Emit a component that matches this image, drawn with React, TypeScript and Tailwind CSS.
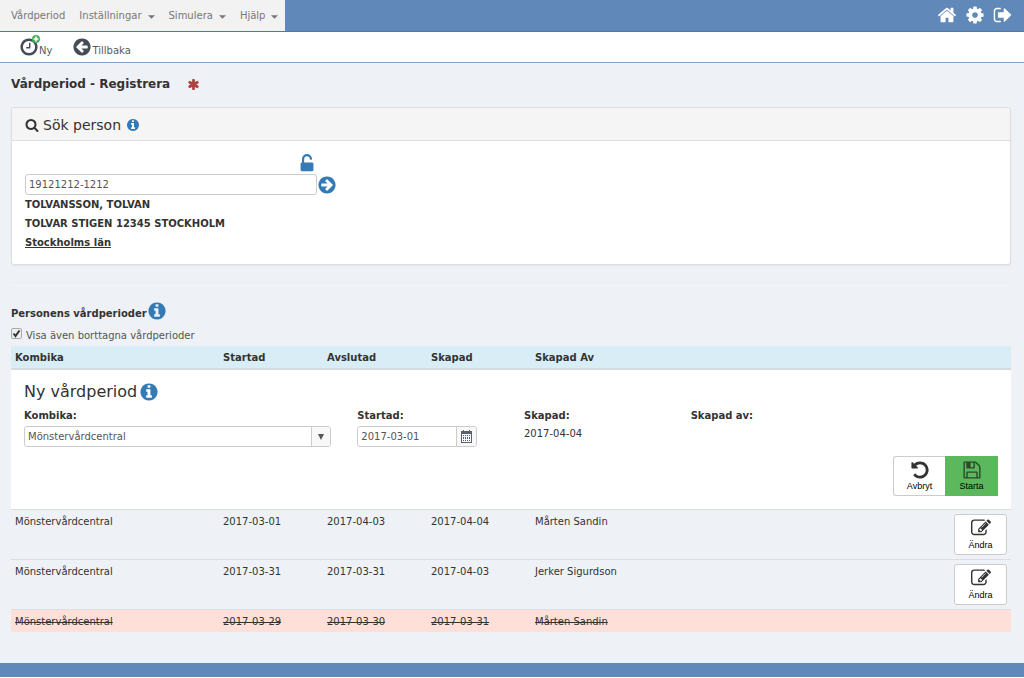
import { useState } from "react";
import type { ReactNode } from "react";

const circle =
  "M1664 896q0 209-103 385.5t-279.5 279.5-385.5 103-385.5-103-279.5-279.5-103-385.5 103-385.5 279.5-279.5 385.5-103 385.5 103 279.5 279.5 103 385.5z";

const icons = {
  home: "M1472 992v480q0 26-19 45t-45 19h-384v-384h-256v384h-384q-26 0-45-19t-19-45v-480q0-1 .5-3t.5-3l575-474 575 474q1 2 1 6zm223-69l-62 74q-8 9-21 11h-3q-13 0-21-7l-692-577-692 577q-12 8-24 7-13-2-21-11l-62-74q-8-10-7-23.5t11-21.5l719-599q32-26 76-26t76 26l244 204v-195q0-14 9-23t23-9h192q14 0 23 9t9 23v408l219 182q10 8 11 21.5t-7 23.5z",
  cog: "M1152 896q0-106-75-181t-181-75-181 75-75 181 75 181 181 75 181-75 75-181zm512-109v222q0 12-8 23t-20 13l-185 28q-19 54-39 91 35 50 107 138 10 12 10 25t-9 23q-27 37-99 108t-94 71q-12 0-26-9l-138-108q-44 23-91 38-16 136-29 186-7 28-36 28h-222q-14 0-24.5-8.5t-11.5-21.5l-28-184q-49-16-90-37l-141 107q-10 9-25 9-14 0-25-11-126-114-165-168-7-10-7-23 0-12 8-23 15-21 51-66.5t54-70.5q-27-50-41-99l-183-27q-13-2-21-12.5t-8-23.5v-222q0-12 8-23t19-13l186-28q14-46 39-92-40-57-107-138-10-12-10-24 0-10 9-23 26-36 98.5-107.5t94.5-71.5q13 0 26 10l138 107q44-23 91-38 16-136 29-186 7-28 36-28h222q14 0 24.5 8.5t11.5 21.5l28 184q49 16 90 37l142-107q9-9 24-9 13 0 25 10 129 119 165 170 7 8 7 22 0 12-8 23-15 21-51 66.5t-54 70.5q26 50 41 98l183 28q13 2 21 12.5t8 23.5z",
  signOut:
    "M704 1440q0 4 1 20t.5 26.5-3 23.5-10 19.5-20.5 6.5h-320q-119 0-203.5-84.5t-84.5-203.5v-704q0-119 84.5-203.5t203.5-84.5h320q13 0 22.5 9.5t9.5 22.5q0 4 1 20t.5 26.5-3 23.5-10 19.5-20.5 6.5h-320q-66 0-113 47t-47 113v704q0 66 47 113t113 47h312l11.5 1 11.5 3 8 5.5 7 9 2 13.5zm928-544q0 26-19 45l-544 544q-19 19-45 19t-45-19-19-45v-288h-448q-26 0-45-19t-19-45v-384q0-26 19-45t45-19h448v-288q0-26 19-45t45-19 45 19l544 544q19 19 19 45z",
  search:
    "M1216 832q0-185-131.5-316.5t-316.5-131.5-316.5 131.5-131.5 316.5 131.5 316.5 316.5 131.5 316.5-131.5 131.5-316.5zm512 832q0 52-38 90t-90 38q-54 0-90-38l-343-342q-179 124-399 124-143 0-273.5-55.5t-225-150-150-225-55.5-273.5 55.5-273.5 150-225 225-150 273.5-55.5 273.5 55.5 225 150 150 225 55.5 273.5q0 220-124 399l343 343q37 37 37 90z",
  info:
    "M1152 1376v-160q0-14-9-23t-23-9h-96v-512q0-14-9-23t-23-9h-320q-14 0-23 9t-9 23v160q0 14 9 23t23 9h96v320h-96q-14 0-23 9t-9 23v160q0 14 9 23t23 9h448q14 0 23-9t9-23zM1024 480v-160q0-14-9-23t-23-9h-192q-14 0-23 9t-9 23v160q0 14 9 23t23 9h192q14 0 23-9t9-23z" +
    circle,
  arrowRight:
    "M1413 896q0-27-18-45l-91-91-362-362q-18-18-45-18t-45 18l-91 91q-18 18-18 45t18 45l189 189h-502q-26 0-45 19t-19 45v128q0 26 19 45t45 19h502l-189 189q-19 19-19 45t19 45l91 91q18 18 45 18t45-18l362-362 91-91q18-18 18-45z" +
    circle,
  clock:
    "M1024 544v448q0 14-9 23t-23 9h-320q-14 0-23-9t-9-23v-64q0-14 9-23t23-9h224v-352q0-14 9-23t23-9h64q14 0 23 9t9 23zM1440 896q0-148-73-273t-198-198-273-73-273 73-198 198-73 273 73 273 198 198 273 73 273-73 198-198 73-273z" +
    circle,
  asterisk:
    "M1546 1050q46 26 59.5 77.5t-12.5 97.5l-64 110q-26 46-77.5 59.5t-97.5-12.5l-266-153v307q0 52-38 90t-90 38h-128q-52 0-90-38t-38-90v-307l-266 153q-46 26-97.5 12.5t-77.5-59.5l-64-110q-26-46-12.5-97.5t59.5-77.5l266-154-266-154q-46-26-59.5-77.5t12.5-97.5l64-110q26-46 77.5-59.5t97.5 12.5l266 153v-307q0-52 38-90t90-38h128q52 0 90 38t38 90v307l266-153q46-26 97.5-12.5t77.5 59.5l64 110q26 46 12.5 97.5t-59.5 77.5l-266 154z",
  unlock:
    "M1376 768q40 0 68 28t28 68v576q0 40-28 68t-68 28h-960q-40 0-68-28t-28-68v-576q0-40 28-68t68-28h32v-320q0-185 131.5-316.5t316.5-131.5 316.5 131.5 131.5 316.5q0 26-19 45t-45 19h-64q-26 0-45-19t-19-45q0-106-75-181t-181-75-181 75-75 181v320h736z",
  undo: "M1664 896q0 156-61 298t-164 245-245 164-298 61q-172 0-327-72.5t-264-204.5q-7-10-6.5-22.5t8.5-20.5l137-138q10-9 25-9 16 2 23 12 73 95 179 147t225 52q104 0 198.5-40.5t163.5-109.5 109.5-163.5 40.5-198.5-40.5-198.5-109.5-163.5-163.5-109.5-198.5-40.5q-98 0-188 35.5t-160 101.5l137 138q31 30 14 69-17 40-59 40h-448q-26 0-45-19t-19-45v-448q0-42 40-59 39-17 69 14l130 129q107-101 244.5-156.5t284.5-55.5q156 0 298 61t245 164 164 245 61 298z",
  save: "M512 1536h768v-384h-768v384zm896 0h128v-896q0-14-10-38.5t-20-34.5l-281-281q-10-10-34-20t-39-10v416q0 40-28 68t-68 28h-576q-40 0-68-28t-28-68v-416h-128v1280h128v-416q0-40 28-68t68-28h832q40 0 68 28t28 68v416zm-384-928v-320q0-13-9.5-22.5t-22.5-9.5h-192q-13 0-22.5 9.5t-9.5 22.5v320q0 13 9.5 22.5t22.5 9.5h192q13 0 22.5-9.5t9.5-22.5zm640 32v928q0 40-28 68t-68 28h-1344q-40 0-68-28t-28-68v-1344q0-40 28-68t68-28h928q40 0 88 20t76 48l280 280q28 28 48 76t20 88z",
  edit: "M888 1184l116-116-152-152-116 116v56h96v96h56zm440-720q-16-16-33 1l-350 350q-17 17-1 33t33-1l350-350q17-17 1-33zm80 594v190q0 119-84.5 203.5t-203.5 84.5h-832q-119 0-203.5-84.5t-84.5-203.5v-832q0-119 84.5-203.5t203.5-84.5h832q63 0 117 25 15 7 18 23 3 17-9 29l-49 49q-14 14-32 8-23-6-45-6h-832q-66 0-113 47t-47 113v832q0 66 47 113t113 47h832q66 0 113-47t47-113v-126q0-13 9-22l64-64q15-15 35-7t20 29zm-96-738l288 288-672 672h-288v-288zm444 132l-92 92-288-288 92-92q28-28 68-28t68 28l152 152q28 28 28 68t-28 68z",
};

function Icon({ name, className }: { name: keyof typeof icons; className?: string }) {
  return (
    <svg viewBox="0 0 1792 1792" fill="currentColor" fillRule="evenodd" aria-hidden="true" className={className}>
      <path d={icons[name]} />
    </svg>
  );
}

const periods = [
  { unit: "Mönstervårdcentral", start: "2017-03-01", end: "2017-04-03", created: "2017-04-04", by: "Mårten Sandin", removed: false },
  { unit: "Mönstervårdcentral", start: "2017-03-31", end: "2017-03-31", created: "2017-04-03", by: "Jerker Sigurdson", removed: false },
  { unit: "Mönstervårdcentral", start: "2017-03-29", end: "2017-03-30", created: "2017-03-31", by: "Mårten Sandin", removed: true },
];

function MenuItem({ label, caret = true }: { label: string; caret?: boolean }) {
  return (
    <button className="flex items-center gap-[6px]">
      {label}
      {caret && (
        <svg viewBox="0 0 8 4" className="w-[7px] h-1 mt-[2px]" fill="#777" aria-hidden="true">
          <path d="M0 0h8L4 4z" />
        </svg>
      )}
    </button>
  );
}

function Header() {
  return (
    <header>
      <div className="flex justify-between h-8 bg-[#6088b8] border-b border-[#5078a8]">
        <nav className="flex items-center gap-[14px] pl-[11px] pr-[7px] bg-[#f2f2f2] text-[#777] text-[10px]">
          <MenuItem label="Vårdperiod" caret={false} />
          <MenuItem label="Inställningar" />
          <MenuItem label="Simulera" />
          <MenuItem label="Hjälp" />
        </nav>
        <div className="flex items-center gap-2 pr-[11px] pb-[2px] text-white">
          <button aria-label="Hem">
            <Icon name="home" className="size-5" />
          </button>
          <button aria-label="Inställningar">
            <Icon name="cog" className="size-5" />
          </button>
          <button aria-label="Logga ut">
            <Icon name="signOut" className="size-5" />
          </button>
        </div>
      </div>
      <div className="flex items-start gap-5 h-[31px] pl-[19px] pt-[5px] bg-white border-b border-[#7f9fc6] text-[#555c66] text-[10px]">
        <button className="flex items-end">
          <span className="relative">
            <Icon name="clock" className="size-5 text-[#444c58]" />
            <svg viewBox="0 0 8 8" className="absolute -top-[2px] left-[13px] size-2" aria-hidden="true">
              <circle cx="4" cy="4" r="4" fill="#4cae5c" />
              <path d="M4 1.6v4.8M1.6 4h4.8" stroke="#fff" strokeWidth="1.6" />
            </svg>
          </span>
          <span className="leading-[12px]">Ny</span>
        </button>
        <button className="flex items-end">
          <Icon name="arrowRight" className="size-5 -scale-x-100 text-[#444c58]" />
          <span className="leading-[12px]">Tillbaka</span>
        </button>
      </div>
    </header>
  );
}

function SearchPanel() {
  return (
    <section className="bg-white border border-[#ddd] rounded-[3px] shadow-xs">
      <h2 className="flex items-center h-[33px] pt-px px-[13px] bg-[#f5f5f5] border-b border-[#ddd] rounded-t-[3px] text-sm">
        <Icon name="search" className="size-[14px] mr-1" />
        Sök person
        <Icon name="info" className="size-[14px] ml-[5px] text-[#337ab7]" />
      </h2>
      <div className="px-[13px] pt-[13px] pb-3">
        <div className="flex justify-end w-[292px]">
          <button aria-label="Lås upp">
            <Icon name="unlock" className="size-5 text-[#337ab7]" />
          </button>
        </div>
        <div className="flex items-center">
          <input
            aria-label="Personnummer"
            defaultValue="19121212-1212"
            className="w-[292px] h-[21px] px-[3px] border border-[#ccc] rounded-[3px] bg-white text-[10px] text-[#555]"
          />
          <button aria-label="Sök">
            <Icon name="arrowRight" className="size-5 text-[#337ab7]" />
          </button>
        </div>
        <div className="text-[10px] leading-[19px] font-bold">
          <p>TOLVANSSON, TOLVAN</p>
          <p>TOLVAR STIGEN 12345 STOCKHOLM</p>
          <p>
            <a href="#lan" className="underline">
              Stockholms län
            </a>
          </p>
        </div>
      </div>
    </section>
  );
}

function Field({ label, className, children }: { label: ReactNode; className?: string; children?: ReactNode }) {
  return (
    <div className={`px-[13px] ${className ?? ""}`}>
      <div className="font-bold leading-[18px]">{label}</div>
      {children}
    </div>
  );
}

function NewPeriodForm() {
  return (
    <form className="bg-white pt-[11px] pb-[13px]" onSubmit={(e) => e.preventDefault()}>
      <h2 className="flex items-center gap-[2px] px-[13px] mb-1 h-[22px] text-base">
        Ny vårdperiod
        <Icon name="info" className="size-5 text-[#337ab7]" />
      </h2>
      <div className="grid grid-cols-6">
        <Field label={<label htmlFor="kombika">Kombika:</label>} className="col-span-2">
          <div className="relative mt-px">
            <select
              id="kombika"
              className="block appearance-none w-full h-[21px] px-[3px] border border-[#ccc] rounded-[3px] bg-white text-[#555]"
            >
              <option>Mönstervårdcentral</option>
            </select>
            <span className="pointer-events-none absolute inset-y-px right-px w-[19px] flex items-center justify-center border-l border-[#ccc] bg-[#f8f8f8] rounded-r-[2px]">
              <svg viewBox="0 0 6 6" className="size-[6px]" fill="#555" aria-hidden="true">
                <path d="M0 0h6L3 6z" />
              </svg>
            </span>
          </div>
        </Field>
        <Field label={<label htmlFor="startad">Startad:</label>}>
          <div className="flex mt-px w-[120px] h-[21px] border border-[#ccc] rounded-[3px] bg-white overflow-hidden">
            <input id="startad" defaultValue="2017-03-01" className="flex-1 min-w-0 px-[3px] text-[#555]" />
            <button
              type="button"
              aria-label="Välj datum"
              className="w-5 flex items-center justify-center border-l border-[#ccc] bg-[#f8f8f8]"
            >
              <svg viewBox="0 0 11 13" className="w-[11px] h-[13px]" fill="#5a6070" aria-hidden="true">
                <path fillRule="evenodd" d="M2 0h1v1h5V0h1v1h2v12H0V1h2zM1 4v8h9V4z" />
                <path d="M2 5h1v1H2zm2 0h1v1H4zm2 0h1v1H6zm2 0h1v1H8zM2 7h1v2H2zm2 0h1v2H4zm2 0h1v2H6zm2 0h1v2H8zM2 10h1v1H2zm2 0h1v1H4zm2 0h1v1H6zm2 0h1v1H8z" />
              </svg>
            </button>
          </div>
        </Field>
        <Field label="Skapad:">
          <div className="mt-px leading-4">2017-04-04</div>
        </Field>
        <Field label="Skapad av:" />
      </div>
      <div className="flex justify-end px-[13px] mt-[9px] font-['Liberation_Sans',sans-serif] text-[9px] text-black">
        <button
          type="button"
          className="flex flex-col items-center w-13 h-10 pt-[3px] border border-r-0 border-[#ccc] rounded-l-[3px] bg-white"
        >
          <Icon name="undo" className="size-5 text-[#333]" />
          <span className="mt-px leading-[10px]">Avbryt</span>
        </button>
        <button
          type="submit"
          className="flex flex-col items-center w-[53px] h-10 pt-[3px] border border-[#5cb85c] bg-[#5cb85c]"
        >
          <Icon name="save" className="size-5 text-[#2b4a2b]" />
          <span className="mt-px leading-[10px]">Starta</span>
        </button>
      </div>
    </form>
  );
}

export default function App() {
  const [showRemoved, setShowRemoved] = useState(true);

  return (
    <div className="bg-[#eef1f6] font-['DejaVu_Sans',Verdana,sans-serif] text-[#333] text-[10px]">
      <Header />
      <main className="pl-[11px] pr-[13px] pt-3 pb-[31px]">
        <h1 className="flex items-center gap-[17px] h-[18px] mb-[14px] text-xs font-bold">
          Vårdperiod - Registrera
          <Icon name="asterisk" className="size-[13px] text-[#a94442]" />
        </h1>
        <SearchPanel />
        <hr className="mt-[17px] mb-[18px] border-[#ebedf1]" />

        <h2 className="flex items-center font-bold">
          <span className="pt-[5px]">Personens vårdperioder</span>
          <Icon name="info" className="size-5 text-[#337ab7]" />
        </h2>
        <label className="flex items-center gap-1 h-[25px] text-[#555]">
          <input
            type="checkbox"
            checked={showRemoved}
            onChange={(e) => setShowRemoved(e.target.checked)}
            className="peer sr-only"
          />
          <span className="size-[11px] flex border border-[#aaa] rounded-[2px] bg-[#eee]">
            {showRemoved && (
              <svg viewBox="0 0 9 9" fill="none" stroke="#333" strokeWidth="2" aria-hidden="true">
                <path d="M1.5 4.5l2 2.5L7.5 1.5" />
              </svg>
            )}
          </span>
          <span className="pt-1">Visa även borttagna vårdperioder</span>
        </label>

        <table className="w-full table-fixed text-left">
          <thead>
            <tr className="h-[23px] bg-[#d9edf7] border-b-2 border-[#d5dade]">
              <th className="w-[208px] px-1">Kombika</th>
              <th className="w-26 px-1">Startad</th>
              <th className="w-26 px-1">Avslutad</th>
              <th className="w-26 px-1">Skapad</th>
              <th className="px-1">Skapad Av</th>
              <th className="w-[61px]" aria-label="Åtgärd" />
            </tr>
          </thead>
          <tbody>
            <tr>
              <td colSpan={6} className="p-0">
                <NewPeriodForm />
              </td>
            </tr>
            {periods
              .filter((p) => showRemoved || !p.removed)
              .map((p, i) => (
                <tr
                  key={i}
                  className={
                    p.removed
                      ? "border-t border-[#ddd] bg-[#fee0d8] align-top line-through"
                      : "border-t border-[#ddd] align-top"
                  }
                >
                  <td className="px-1 pt-[5px] pb-[3px] leading-[14px]">{p.unit}</td>
                  <td className="px-1 pt-[5px] pb-[3px] leading-[14px]">{p.start}</td>
                  <td className="px-1 pt-[5px] pb-[3px] leading-[14px]">{p.end}</td>
                  <td className="px-1 pt-[5px] pb-[3px] leading-[14px]">{p.created}</td>
                  <td className="px-1 pt-[5px] pb-[3px] leading-[14px]">{p.by}</td>
                  <td className="px-1">
                    {!p.removed && (
                      <button className="flex flex-col items-center w-[53px] h-[41px] my-1 pt-[3px] border border-[#ccc] rounded-[3px] bg-white font-['Liberation_Sans',sans-serif] text-[9px] text-black">
                        <Icon name="edit" className="size-5 text-[#333]" />
                        <span className="mt-[2px] leading-[10px]">Ändra</span>
                      </button>
                    )}
                  </td>
                </tr>
              ))}
          </tbody>
        </table>
      </main>
      <footer className="h-[14px] bg-[#6088b8]" />
    </div>
  );
}
